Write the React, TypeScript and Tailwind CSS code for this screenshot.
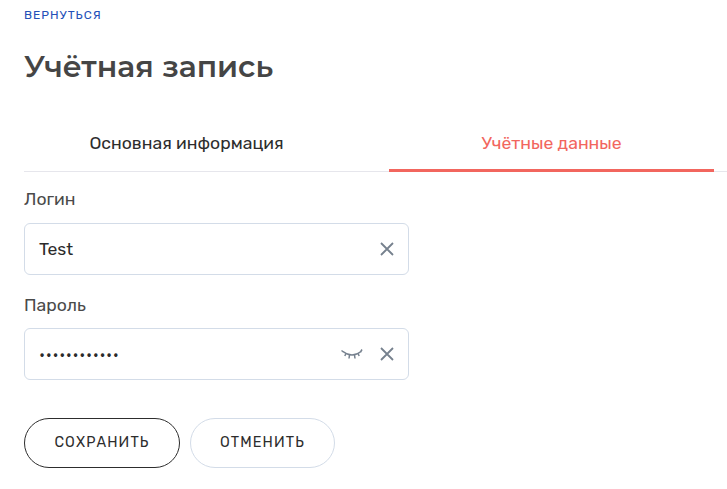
import React from "react";

const X = () => (
  <svg width="14" height="14" viewBox="0 0 14 14" fill="none" stroke="#76818e" strokeWidth="1.8">
    <path d="M1 1 13 13M13 1 1 13" />
  </svg>
);

const Eye = () => (
  <svg width="22" height="11" viewBox="0 0 22 11" fill="none" stroke="#76818e" strokeWidth="1.5">
    <path d="M2 2.5C5 5 8 6 11 6s6-1 9-3.5" />
    <path d="M0.5 1.5 2.5 3M5 4.5 3.8 7M8.5 6 8 9.5M13.5 6 14 9.5M17 4.5 18.2 7M19.5 3 21 0.5" />
  </svg>
);

function Field({ label, value, password }: { label: string; value: string; password?: boolean }) {
  return (
    <div className="flex flex-col">
      <label className="h-[24px] text-[17.6px] leading-[24px] text-[#4a4a4a]">{label}</label>
      <div className={password ? "mt-[11px] flex h-[52px] w-[385px] items-center rounded-[6px] border border-[#d3dce8] bg-white px-[14px]" : "mt-[12px] flex h-[52px] w-[385px] items-center rounded-[6px] border border-[#d3dce8] bg-white px-[14px]"}>
        <span className={password ? "flex-1 translate-y-[1px] text-[16px] tracking-[0.6px] text-[#2b2b2b]" : "flex-1 text-[17.6px] text-[#2b2b2b]"}>
          {value}
        </span>
        {password && (
          <span className="mr-[17px] flex">
            <Eye />
          </span>
        )}
        <X />
      </div>
    </div>
  );
}

export default function App() {
  return (
    <div className="min-h-[489px] bg-white pl-[24px] pt-[8px] font-['Rubik','Inter','Roboto',sans-serif]">
      <a className="block h-[14px] text-[12px] leading-[14px] tracking-[1px] text-[#2450b8]">ВЕРНУТЬСЯ</a>
      <h1 className="mt-[25px] h-[40px] font-['Montserrat','Open_Sans',sans-serif] text-[30px] font-semibold leading-[40px] text-[#454545]">
        Учётная запись
      </h1>
      <div className="mt-[36px] flex h-[49px] gap-[40px] border-b border-[#e6e6ec]">
        <div className="flex h-[49px] w-[325px] items-center justify-center pb-[8px] text-[17.6px] text-[#2d2d2d]">
          Основная информация
        </div>
        <div className="flex h-[49px] w-[325px] items-center justify-center border-b-[3px] border-[#f2665e] pb-[5px] text-[17.6px] text-[#f2665e]">
          Учётные данные
        </div>
      </div>
      <div className="mt-[15px] flex flex-col gap-[18px]">
        <Field label="Логин" value="Test" />
        <Field label="Пароль" value="••••••••••••" password />
      </div>
      <div className="mt-[38px] flex gap-[10px]">
        <button className="h-[50px] w-[156px] rounded-[25px] border border-[#2d2d2d] bg-white text-[14.4px] tracking-[1.1px] text-[#2d2d2d]">
          СОХРАНИТЬ
        </button>
        <button className="h-[50px] w-[145px] rounded-[25px] border border-[#d3dce8] bg-white text-[14.4px] tracking-[1.1px] text-[#2d2d2d]">
          ОТМЕНИТЬ
        </button>
      </div>
    </div>
  );
}
